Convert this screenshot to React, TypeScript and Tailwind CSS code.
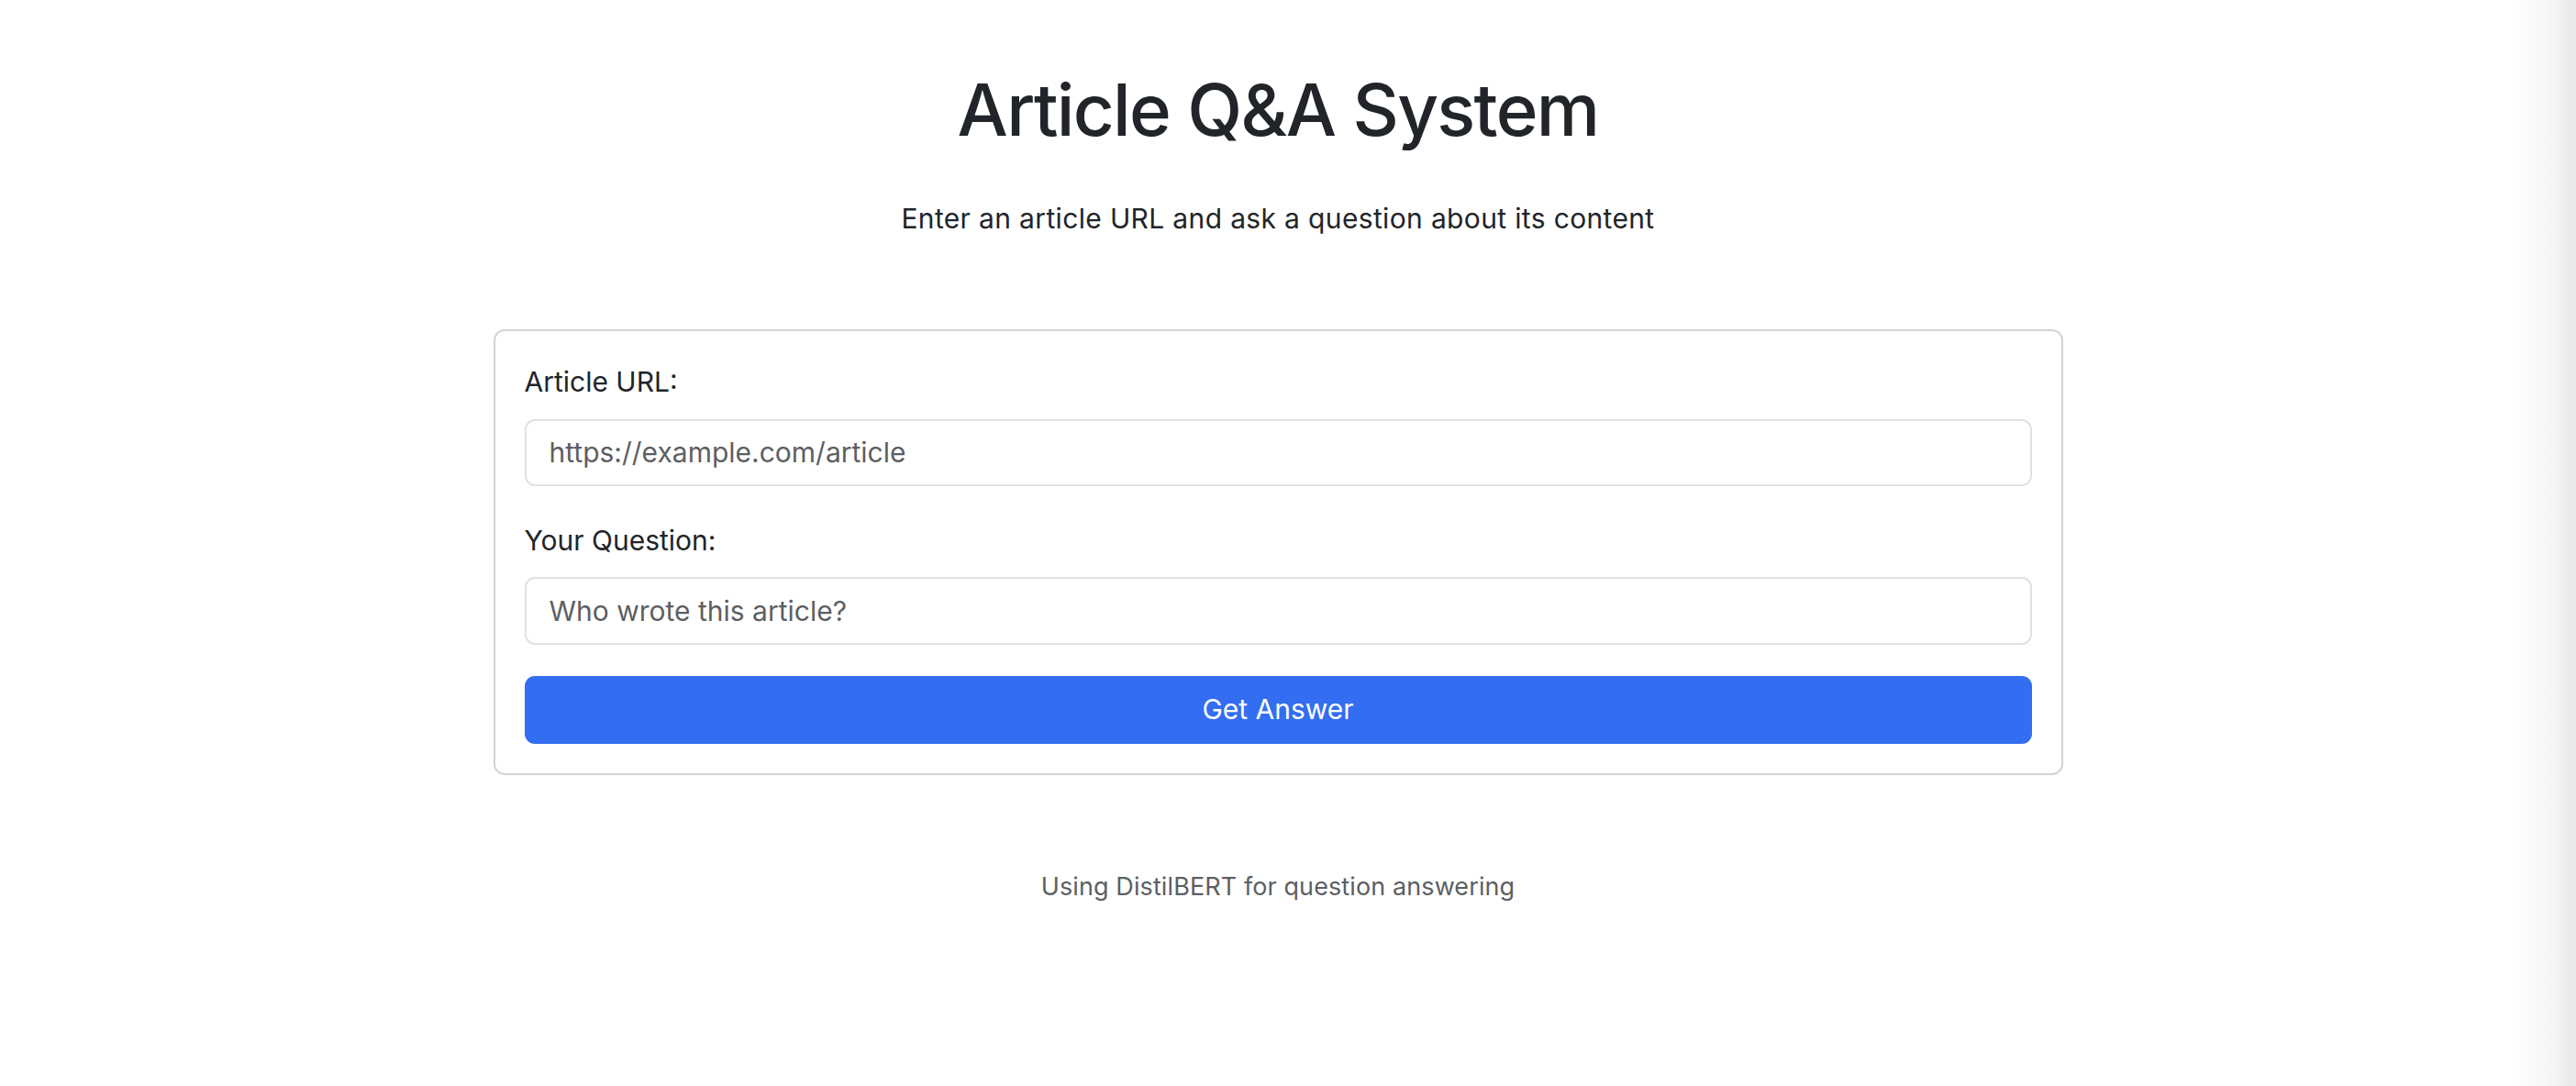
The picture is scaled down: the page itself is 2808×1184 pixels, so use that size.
import { useState } from "react";

export default function App() {
  const [url, setUrl] = useState("");
  const [question, setQuestion] = useState("");

  return (
    <div
      className="min-h-screen w-full bg-[linear-gradient(to_right,#ffffff_2740px,#f4f4f4_2785px,#ececec_2800px,#e9e9e9_2800px)] text-[#212529]"
      style={{ fontFamily: "Inter, 'Noto Sans', sans-serif" }}
    >
      <div className="w-[2786px] flex flex-col items-center pt-[73px]">
        {/* header */}
        <h1 className="text-[78px] leading-[1.2] font-medium tracking-[-1.7px]">Article Q&amp;A System</h1>
        <p className="mt-[49px] text-[30px] leading-[45px] tracking-[0.35px]">
          Enter an article URL and ask a question about its content
        </p>

        {/* form card */}
        <form
          className="mt-[98px] w-[1711px] rounded-[12px] border-2 border-[#d4d4d4] bg-white pt-[33px] px-[32px] pb-[32px]"
          onSubmit={(e) => e.preventDefault()}
        >
          <label className="block text-[30px] leading-[45px] mb-[18px]">Article URL:</label>
          <input
            type="text"
            value={url}
            onChange={(e) => setUrl(e.target.value)}
            placeholder="https://example.com/article"
            className="block w-full h-[73px] rounded-[11px] border-2 border-[#dee2e6] px-[25px] text-[30px] text-[#212529] placeholder:text-[#5c5f63] outline-none"
          />

          <label className="block mt-[37px] text-[30px] leading-[45px] mb-[17px]">Your Question:</label>
          <input
            type="text"
            value={question}
            onChange={(e) => setQuestion(e.target.value)}
            placeholder="Who wrote this article?"
            className="block w-full h-[74px] rounded-[11px] border-2 border-[#dee2e6] px-[25px] text-[30px] text-[#212529] placeholder:text-[#5c5f63] outline-none"
          />

          <button
            type="submit"
            className="mt-[34px] w-full h-[74px] rounded-[11px] bg-[#336df1] text-white text-[30px]"
          >
            Get Answer
          </button>
        </form>

        <p className="mt-[102px] text-[27px] leading-[40px] tracking-[0.1px] text-[#5c5f63]">
          Using DistilBERT for question answering
        </p>
      </div>
    </div>
  );
}
